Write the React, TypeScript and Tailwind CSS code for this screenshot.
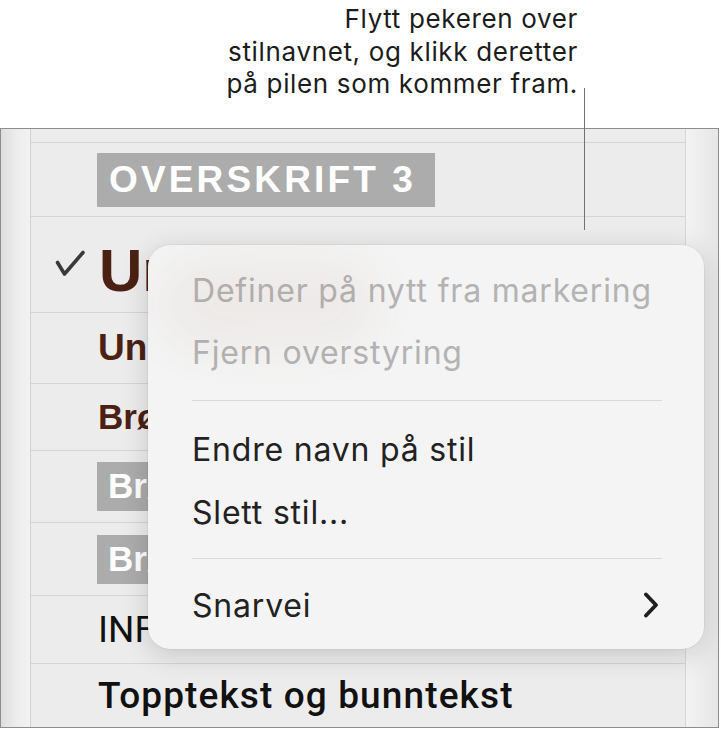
// Style rows in the list behind the popup menu
const rowBase = 'flex items-center border-b border-[#d5d5d5] shrink-0';

function Separator({ className = '' }: { className?: string }) {
  return <div className={`ml-[44px] mr-[42px] h-px bg-[#d9d9d9] ${className}`} />;
}

function MenuItem({ label, disabled, className = '' }: { label: string; disabled?: boolean; className?: string }) {
  return (
    <div
      className={`flex items-center pl-[44px] pr-[46px] text-[32px] tracking-[0.025em] leading-none ${
        disabled ? 'text-[#b3b3b3]' : 'text-[#222222]'
      } ${className}`}
    >
      {label}
    </div>
  );
}

export default function App() {
  return (
    <div className="relative w-[721px] h-[729px] bg-white overflow-hidden font-['Inter',sans-serif]">
      {/* Callout text */}
      <div className="h-[128px] pt-[3px] pr-[143px] text-right text-[26px] tracking-[0.025em] leading-[32.5px] text-[#1c1c1c]">
        <div>Flytt pekeren over</div>
        <div>stilnavnet, og klikk deretter</div>
        <div>på pilen som kommer fram.</div>
      </div>

      {/* Style list panel */}
      <div className="flex h-[600px] w-[719px] border border-[#8d8d8d] bg-[#ececec]">
        <div className="w-[30px] shrink-0 border-r border-[#d2d2d2] bg-gradient-to-r from-[#dedede] via-[#ececec] to-[#f2f2f2]" />

        <div className="flex flex-1 flex-col overflow-hidden font-['Liberation_Sans',sans-serif]">
          <div className="h-[14px] shrink-0 border-b border-[#d5d5d5]" />

          <div className={`${rowBase} h-[74px] pl-[66px]`}>
            <span className="bg-[#acacac] pl-[12px] pr-[19px] h-[54px] flex items-center text-[37px] font-bold tracking-[0.085em] text-white">
              OVERSKRIFT 3
            </span>
          </div>

          <div className={`${rowBase} h-[96px] pl-[24px]`}>
            <svg width="30" height="28" viewBox="0 0 30 28" className="shrink-0 mt-[-2px]">
              <path d="M2.5 12.5 L9.5 24 L28 2.5" fill="none" stroke="#3a3a3a" strokeWidth="3.6" strokeLinecap="round" strokeLinejoin="round" />
            </svg>
            <span className="ml-[14px] mt-[12px] text-[60px] font-bold text-[#4a2113] whitespace-nowrap">Undertittel</span>
          </div>

          <div className={`${rowBase} h-[71px] pl-[67px]`}>
            <span className="text-[37px] font-bold text-[#4a2113] whitespace-nowrap">Undertekst</span>
          </div>

          <div className={`${rowBase} h-[67px] pl-[67px]`}>
            <span className="text-[35px] font-bold text-[#4a2113] whitespace-nowrap">Brødtekst</span>
          </div>

          <div className={`${rowBase} h-[72px] pl-[66px]`}>
            <span className="bg-[#acacac] pl-[11px] pr-[10px] h-[49px] flex items-center text-[35px] font-bold text-white whitespace-nowrap">
              Brødtekst liten
            </span>
          </div>

          <div className={`${rowBase} h-[73px] pl-[66px]`}>
            <span className="bg-[#acacac] pl-[11px] pr-[10px] h-[49px] flex items-center text-[35px] font-bold text-white whitespace-nowrap">
              Brødtekst uthevet
            </span>
          </div>

          <div className={`${rowBase} h-[68px] pl-[67px]`}>
            <span className="font-['Roboto',sans-serif] text-[37px] text-[#111111] whitespace-nowrap">INFORMASJON</span>
          </div>

          <div className="flex flex-1 items-center pl-[67px]">
            <span className="font-['Roboto',sans-serif] text-[37px] font-medium tracking-[0.03em] text-[#111111] whitespace-nowrap">
              Topptekst og bunntekst
            </span>
          </div>
        </div>

        <div className="w-[33px] shrink-0 border-l border-[#d6d6d6] bg-gradient-to-r from-[#f3f3f3] to-[#e6e6e6]" />
      </div>

      {/* Leader line from the callout */}
      <div className="absolute left-[584px] top-[88px] h-[142px] w-px bg-[#727272]" />

      {/* Popup menu */}
      <div className="absolute left-[148px] top-[245px] flex h-[404px] w-[556px] flex-col overflow-hidden rounded-[22px] bg-[#f4f4f4] pt-[15px] shadow-[0_6px_28px_rgba(0,0,0,0.16),0_0_0_0.5px_rgba(0,0,0,0.08)]">
        <div className="pointer-events-none absolute left-[10px] top-[14px] h-[90px] w-[220px] rounded-full bg-[#8a5a40] opacity-[0.06] blur-xl" />
        <MenuItem label="Definer på nytt fra markering" disabled className="h-[62px]" />
        <MenuItem label="Fjern overstyring" disabled className="h-[62px]" />
        <Separator className="mt-[16px] mb-[17px]" />
        <MenuItem label="Endre navn på stil" className="h-[63px]" />
        <MenuItem label="Slett stil..." className="h-[63px]" />
        <Separator className="mt-[14px] mb-[16px]" />
        <div className="flex h-[62px] items-center justify-between pl-[44px] pr-[45px] text-[32px] tracking-[0.025em] leading-none text-[#222222]">
          <span>Snarvei</span>
          <svg width="16" height="26" viewBox="0 0 16 26" className="mt-[-2px]">
            <path d="M3 2.5 L13 13 L3 23.5" fill="none" stroke="#1e1e1e" strokeWidth="3.8" strokeLinecap="round" strokeLinejoin="round" />
          </svg>
        </div>
      </div>
    </div>
  );
}
